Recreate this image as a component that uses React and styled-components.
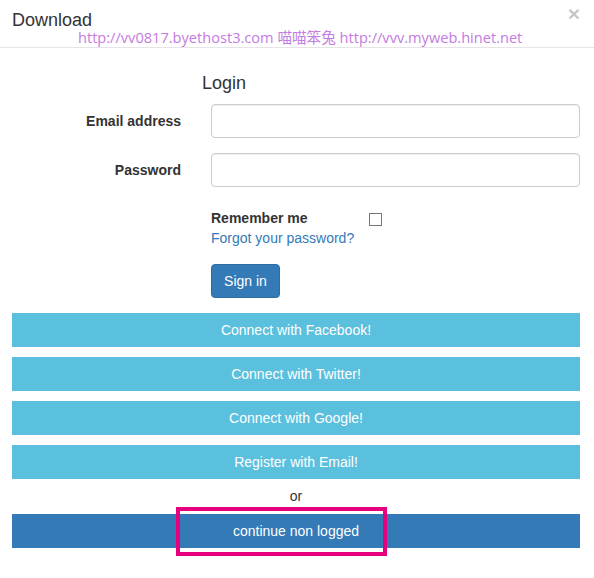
import styled, { createGlobalStyle } from "styled-components";

const GlobalStyle = createGlobalStyle`
  body {
    margin: 0;
    background: #fff;
    font-family: "Liberation Sans", Arial, sans-serif;
    font-size: 14px;
    color: #333;
  }
`;

const Modal = styled.div`
  width: 594px;
  height: 578px;
  background: #fff;
`;

const Header = styled.div`
  position: relative;
  height: 48px;
  border-bottom: 1px solid #e5e5e5;
  display: flex;
  justify-content: space-between;
  align-items: flex-start;
  padding: 0 14px 0 12px;
  box-sizing: border-box;
`;

const HeaderTitle = styled.h4`
  margin: 0;
  padding-top: 10px;
  font-size: 18px;
  font-weight: 400;
  line-height: 20px;
  color: #333;
`;

const Close = styled.span`
  padding-top: 3px;
  font-size: 21px;
  font-weight: 700;
  line-height: 21px;
  color: #000;
  opacity: 0.22;
`;

const Watermark = styled.span`
  position: absolute;
  left: 78px;
  top: 28px;
  font-family: "Open Sans", "Noto Sans CJK TC", sans-serif;
  font-size: 14.6px;
  line-height: 18px;
  color: #c47be0;
  white-space: nowrap;
`;

const Body = styled.div`
  padding: 25px 14px 0 12px;
`;

const FormGrid = styled.div`
  display: grid;
  grid-template-columns: 169px 1fr;
  column-gap: 30px;
  align-items: center;
`;

const Heading = styled.h4`
  grid-column: 2;
  margin: 0 0 11px -9px;
  font-size: 18px;
  font-weight: 400;
  line-height: 20px;
`;

const Label = styled.label`
  text-align: right;
  font-weight: 700;
  line-height: 20px;
  margin-bottom: ${(p) => p.$mb || 0}px;
`;

const Input = styled.input`
  height: 34px;
  box-sizing: border-box;
  border: 1px solid #ccc;
  border-radius: 4px;
  box-shadow: inset 0 1px 1px rgba(0, 0, 0, 0.075);
  margin-bottom: ${(p) => p.$mb || 0}px;
`;

const Side = styled.div`
  grid-column: 2;
  margin-top: 21px;
`;

const RememberRow = styled.div`
  display: flex;
  align-items: center;
`;

const RememberText = styled.span`
  width: 158px;
  font-weight: 700;
  line-height: 20px;
`;

const Check = styled.span`
  width: 11px;
  height: 11px;
  border: 1px solid #777;
  background: #fff;
  margin-top: 2px;
`;

const Forgot = styled.a`
  display: block;
  color: #337ab7;
  text-decoration: none;
  line-height: 20px;
`;

const SignIn = styled.button`
  margin-top: 16px;
  height: 34px;
  width: 69px;
  padding: 0;
  border: 1px solid #2e6da4;
  border-radius: 4px;
  background: #337ab7;
  color: #fff;
  font-family: inherit;
  font-size: 14px;
`;

const Buttons = styled.div`
  display: flex;
  flex-direction: column;
  gap: 10px;
  margin-top: 15px;
`;

const WideButton = styled.div`
  position: relative;
  height: 34px;
  display: flex;
  align-items: center;
  justify-content: center;
  background: ${(p) => (p.$primary ? "#337ab7" : "#5bc0de")};
  color: #fff;
  font-size: 14px;
`;

const Or = styled.div`
  text-align: center;
  line-height: 20px;
  margin: 7px 0 8px;
`;

const Highlight = styled.div`
  position: absolute;
  left: 164px;
  top: -7px;
  width: 211px;
  height: 49px;
  box-sizing: border-box;
  border: 4px solid #e6007e;
`;

export default function App() {
  return (
    <Modal>
      <GlobalStyle />
      <Header>
        <HeaderTitle>Download</HeaderTitle>
        <Close>×</Close>
        <Watermark>http://vv0817.byethost3.com 喵喵笨兔 http://vvv.myweb.hinet.net</Watermark>
      </Header>
      <Body>
        <FormGrid>
          <Heading>Login</Heading>
          <Label $mb={15}>Email address</Label>
          <Input $mb={15} />
          <Label>Password</Label>
          <Input />
          <Side>
            <RememberRow>
              <RememberText>Remember me</RememberText>
              <Check />
            </RememberRow>
            <Forgot href="#">Forgot your password?</Forgot>
            <SignIn>Sign in</SignIn>
          </Side>
        </FormGrid>
        <Buttons>
          <WideButton>Connect with Facebook!</WideButton>
          <WideButton>Connect with Twitter!</WideButton>
          <WideButton>Connect with Google!</WideButton>
          <WideButton>Register with Email!</WideButton>
        </Buttons>
        <Or>or</Or>
        <WideButton $primary>
          continue non logged
          <Highlight />
        </WideButton>
      </Body>
    </Modal>
  );
}
